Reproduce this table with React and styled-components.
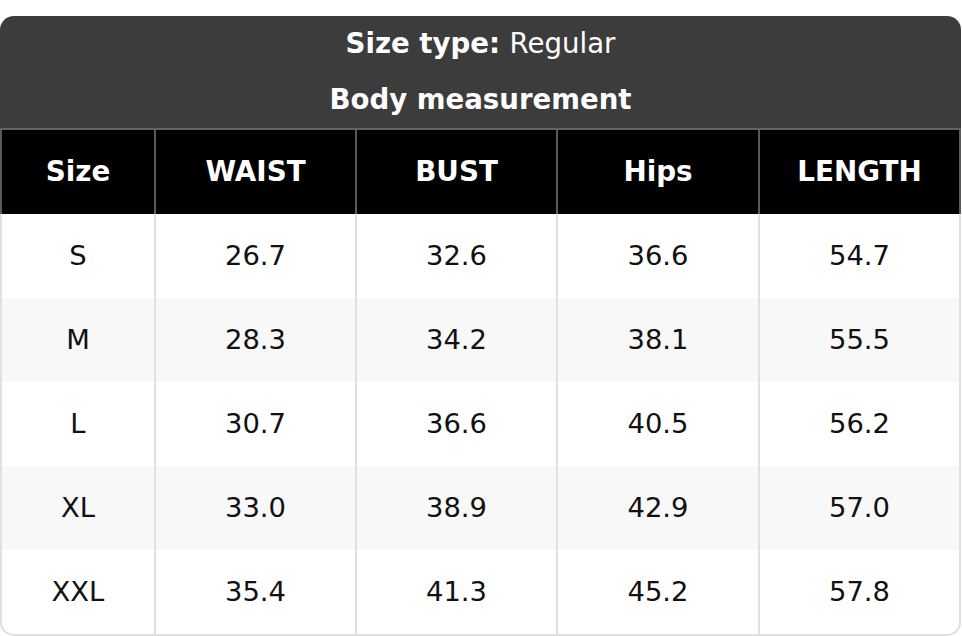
import React from "react";
import styled, { createGlobalStyle } from "styled-components";

const GlobalStyle = createGlobalStyle`
  html, body {
    margin: 0;
    padding: 0;
    background: #fff;
  }
  body {
    font-family: "DejaVu Sans", "Liberation Sans", sans-serif;
  }
`;

const columns = ["Size", "WAIST", "BUST", "Hips", "LENGTH"];

const rows = [
  ["S", "26.7", "32.6", "36.6", "54.7"],
  ["M", "28.3", "34.2", "38.1", "55.5"],
  ["L", "30.7", "36.6", "40.5", "56.2"],
  ["XL", "33.0", "38.9", "42.9", "57.0"],
  ["XXL", "35.4", "41.3", "45.2", "57.8"],
];

export default function App() {
  return (
    <>
      <GlobalStyle />
      <Page>
        <Chart>
          <Title>
            <TitleLine>
              <b>{"Size type: "}</b>
              <span>Regular</span>
            </TitleLine>
            <TitleLine>
              <b>Body measurement</b>
            </TitleLine>
          </Title>
          <HeadRow>
            {columns.map((c) => (
              <HeadCell key={c}>{c}</HeadCell>
            ))}
          </HeadRow>
          <Body>
            {rows.map((r, i) => (
              <Row key={r[0]} $striped={i % 2 === 1}>
                {r.map((v, j) => (
                  <Cell key={j}>{v}</Cell>
                ))}
              </Row>
            ))}
          </Body>
        </Chart>
      </Page>
    </>
  );
}

const Page = styled.div`
  width: 962px;
  padding-top: 16px;
`;

const Chart = styled.div`
  width: 961px;
  border-radius: 14px;
  overflow: hidden;
  box-sizing: border-box;
`;

const Title = styled.div`
  background: #3c3c3c;
  color: #fff;
  border-bottom: 2px solid #636363;
`;

const TitleLine = styled.div`
  height: 56px;
  box-sizing: border-box;
  padding-bottom: 2px;
  display: flex;
  align-items: center;
  justify-content: center;
  font-size: 27.6px;
  font-weight: 400;

  b {
    font-weight: 700;
    white-space: pre;
  }
`;

const grid = `
  display: grid;
  grid-template-columns: 152px 199px 199px 200px 199px;
  column-gap: 2px;
  padding: 0 2px;
`;

const HeadRow = styled.div`
  ${grid}
  background: #5a5a5a;
`;

const HeadCell = styled.div`
  background: #000;
  color: #fff;
  height: 84px;
  box-sizing: border-box;
  padding-bottom: 2px;
  display: flex;
  align-items: center;
  justify-content: center;
  font-size: 27.8px;
  font-weight: 700;
`;

const Body = styled.div`
  background: #e0e0e0;
  padding-bottom: 2px;
  border-radius: 0 0 14px 14px;
`;

const Row = styled.div`
  ${grid}
  background: #e0e0e0;

  & > div {
    background: ${(p) => (p.$striped ? "#f8f8f8" : "#fff")};
  }

  &:last-child > div:first-child {
    border-bottom-left-radius: 12px;
  }
  &:last-child > div:last-child {
    border-bottom-right-radius: 12px;
  }
`;

const Cell = styled.div`
  height: 84px;
  box-sizing: border-box;
  padding-bottom: 2px;
  display: flex;
  align-items: center;
  justify-content: center;
  color: #111;
  font-size: 27.4px;
`;
